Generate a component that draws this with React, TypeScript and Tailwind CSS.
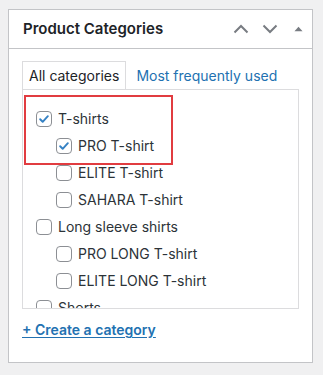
import React from 'react';

type Cat = { label: string; level: number; checked?: boolean };

const cats: Cat[] = [
  { label: 'T-shirts', level: 0, checked: true },
  { label: 'PRO T-shirt', level: 1, checked: true },
  { label: 'ELITE T-shirt', level: 1 },
  { label: 'SAHARA T-shirt', level: 1 },
  { label: 'Long sleeve shirts', level: 0 },
  { label: 'PRO LONG T-shirt', level: 1 },
  { label: 'ELITE LONG T-shirt', level: 1 },
  { label: 'Shorts', level: 0 },
];

const Checkbox: React.FC<{ checked?: boolean }> = ({ checked }) => (
  <span className="flex h-4 w-4 shrink-0 items-center justify-center rounded-[4px] border border-[#8c8f94] bg-white">
    {checked && (
      <svg viewBox="0 0 16 16" className="h-4 w-4">
        <path d="M3.6 8.3l2.9 2.9 5.9-6.4" fill="none" stroke="#3582c4" strokeWidth="2.2" strokeLinecap="round" strokeLinejoin="round" />
      </svg>
    )}
  </span>
);

const App: React.FC = () => {
  return (
    <div className="h-[375px] w-[323px] overflow-hidden bg-[#f0f0f1] pl-2 pt-[9px] font-['Inter',sans-serif] text-[#1d2327]">
      <div className="flex h-[354px] w-[305px] flex-col border border-[#c3c4c7] bg-white">
        <div className="flex h-[39px] items-center justify-between border-b border-[#c3c4c7] pl-[14px] pr-[9px]">
          <h2 className="text-[15px] font-semibold">Product Categories</h2>
          <div className="flex items-center gap-[13px] text-[#787c82]">
            <svg viewBox="0 0 16 10" className="h-[10px] w-[16px]">
              <path d="M1.5 8.5l6.5-6.5 6.5 6.5" fill="none" stroke="currentColor" strokeWidth="2" />
            </svg>
            <svg viewBox="0 0 16 10" className="h-[10px] w-[16px]">
              <path d="M1.5 1.5l6.5 6.5 6.5-6.5" fill="none" stroke="currentColor" strokeWidth="2" />
            </svg>
            <svg viewBox="0 0 10 6" className="ml-[3px] h-[6px] w-[9px]">
              <path d="M0.5 5.5h9L5 0.5z" fill="currentColor" />
            </svg>
          </div>
        </div>
        <div className="pl-[13px] pt-3">
          <div className="flex items-end text-[14px]">
            <div className="flex h-[28px] items-center border border-b-0 border-[#dcdcde] px-[6px]">All categories</div>
            <a href="#" className="ml-[10px] flex h-[28px] items-center text-[#2271b1]">Most frequently used</a>
          </div>
          <div className="relative h-[220px] w-[277px] overflow-hidden border border-[#dcdcde] px-[13px] pt-[15px]">
            <ul className="text-[14px] text-[#2c3338]">
              {cats.map((c) => (
                <li key={c.label} className={`flex h-[27px] items-center gap-[6px] ${c.level ? 'pl-5' : ''}`}>
                  <Checkbox checked={c.checked} />
                  <span>{c.label}</span>
                </li>
              ))}
            </ul>
            <div className="absolute left-[1px] top-[5px] h-[70px] w-[149px] border-2 border-[#e13c40]" />
          </div>
          <a href="#" className="mt-[10px] inline-block text-[14px] font-semibold text-[#2271b1] underline underline-offset-2">
            + Create a category
          </a>
        </div>
      </div>
    </div>
  );
};

export default App;
